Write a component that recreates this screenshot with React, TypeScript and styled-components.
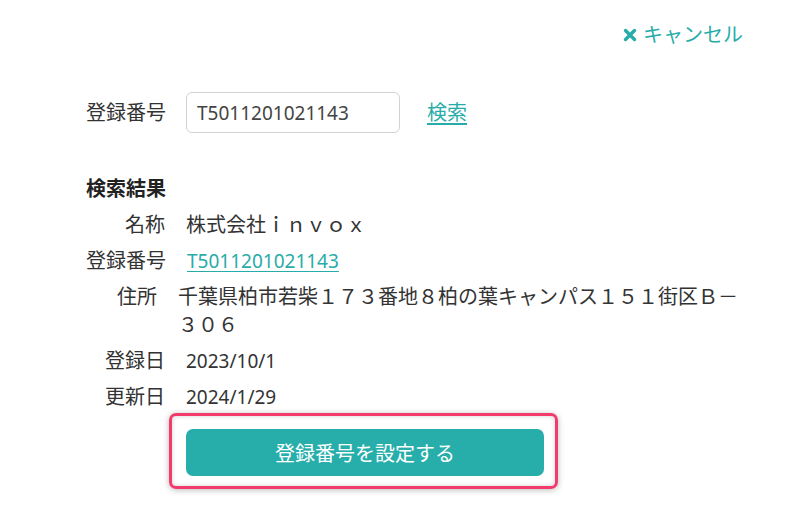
import React from "react";
import styled, { createGlobalStyle } from "styled-components";

const Global = createGlobalStyle`
  html, body { margin: 0; padding: 0; background: #ffffff; }
  body {
    font-family: "Noto Sans", "Noto Sans CJK JP", sans-serif;
    color: #333333;
  }
`;

const TEAL = "#28aca9";

const Page = styled.div`
  width: 800px;
  height: 506px;
  box-sizing: border-box;
  padding: 21px 57px 0 86px;
  display: flex;
  flex-direction: column;
`;

const TopBar = styled.div`
  display: flex;
  justify-content: flex-end;
`;

const CancelLink = styled.a`
  display: flex;
  align-items: center;
  gap: 6px;
  color: ${TEAL};
  font-size: 20px;
  line-height: 28px;
  text-decoration: none;
  cursor: pointer;
`;

const SearchRow = styled.div`
  display: flex;
  align-items: center;
  margin-top: 43px;
`;

const FieldLabel = styled.label`
  font-size: 20px;
  line-height: 28px;
  width: 79px;
  margin-right: 21px;
  white-space: nowrap;
`;

const Input = styled.input`
  box-sizing: border-box;
  width: 214px;
  height: 41px;
  border: 1px solid #cfd3d8;
  border-radius: 6px;
  padding: 0 10px;
  font-family: "Noto Sans", "Noto Sans CJK JP", sans-serif;
  font-size: 19px;
  color: #444444;
  outline: none;
`;

const TextLink = styled.a`
  margin-left: 27px;
  font-size: 20px;
  line-height: 28px;
  color: ${TEAL};
  text-decoration: underline;
  text-underline-offset: 3px;
  cursor: pointer;
`;

const ResultTitle = styled.div`
  margin-top: 42px;
  font-size: 20px;
  line-height: 28px;
  font-weight: 700;
  color: #222222;
`;

const Rows = styled.div`
  margin-top: 8px;
  display: flex;
  flex-direction: column;
  gap: 8px;
`;

const Row = styled.div`
  display: flex;
  align-items: flex-start;
  gap: 21px;
  font-size: 20px;
  line-height: 28px;
`;

const RowLabel = styled.div<{ $w: number }>`
  flex: 0 0 ${(p) => p.$w}px;
  text-align: right;
  white-space: nowrap;
`;

const RowValue = styled.div`
  flex: 1 1 auto;
  min-width: 0;
`;

const Latin = styled.span`
  font-size: 19px;
`;

const ValueLink = styled.a`
  color: ${TEAL};
  font-size: 19px;
  text-decoration: underline;
  text-underline-offset: 3px;
`;

const Highlight = styled.div`
  align-self: flex-start;
  margin-top: 2px;
  margin-left: 83px;
  border: 3px solid #f23a6c;
  border-radius: 7px;
  padding: 13px 11px 10px 14px;
  box-shadow: 0 1px 6px rgba(0, 0, 0, 0.28), inset 0 0 5px rgba(0, 0, 0, 0.18);
`;

const PrimaryButton = styled.button`
  display: block;
  width: 358px;
  height: 47px;
  border: none;
  border-radius: 7px;
  background: #27aeab;
  color: #ffffff;
  font-family: "Noto Sans", "Noto Sans CJK JP", sans-serif;
  font-size: 20px;
  cursor: pointer;
`;

const XIcon = () => (
  <svg width="14" height="14" viewBox="0 0 14 14" aria-hidden="true">
    <path d="M2.5 2.5 L11.5 11.5 M11.5 2.5 L2.5 11.5" stroke={TEAL} strokeWidth="3.4" strokeLinecap="round" />
  </svg>
);

export default function App() {
  return (
    <>
      <Global />
      <Page>
        <TopBar>
          <CancelLink>
            <XIcon />
            キャンセル
          </CancelLink>
        </TopBar>
        <SearchRow>
          <FieldLabel>登録番号</FieldLabel>
          <Input defaultValue="T5011201021143" />
          <TextLink>検索</TextLink>
        </SearchRow>
        <ResultTitle>検索結果</ResultTitle>
        <Rows>
          <Row>
            <RowLabel $w={79}>名称</RowLabel>
            <RowValue>株式会社ｉｎｖｏｘ</RowValue>
          </Row>
          <Row>
            <RowLabel $w={79}>登録番号</RowLabel>
            <RowValue>
              <ValueLink>T5011201021143</ValueLink>
            </RowValue>
          </Row>
          <Row>
            <RowLabel $w={71}>住所</RowLabel>
            <RowValue>千葉県柏市若柴１７３番地８柏の葉キャンパス１５１街区Ｂ－３０６</RowValue>
          </Row>
          <Row>
            <RowLabel $w={79}>登録日</RowLabel>
            <RowValue>
              <Latin>2023/10/1</Latin>
            </RowValue>
          </Row>
          <Row>
            <RowLabel $w={79}>更新日</RowLabel>
            <RowValue>
              <Latin>2024/1/29</Latin>
            </RowValue>
          </Row>
        </Rows>
        <Highlight>
          <PrimaryButton>登録番号を設定する</PrimaryButton>
        </Highlight>
      </Page>
    </>
  );
}
